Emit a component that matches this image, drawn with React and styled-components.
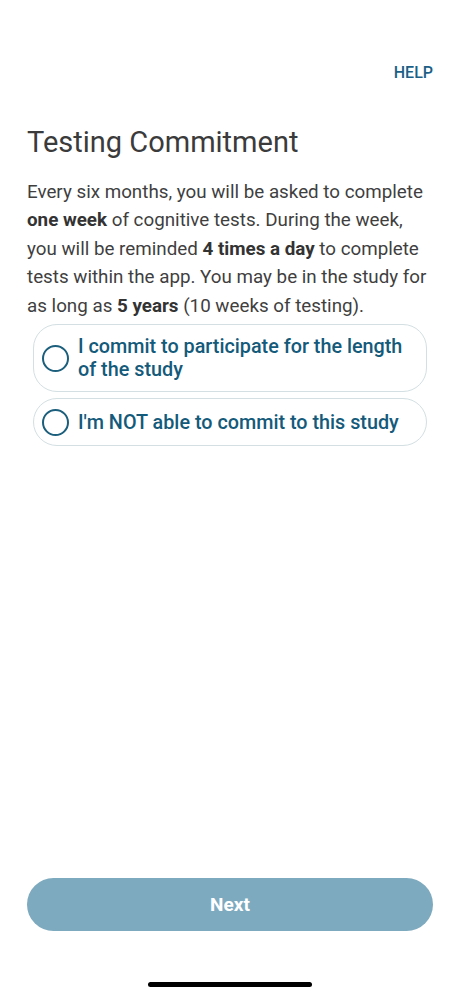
import React, { useState } from 'react';
import styled, { createGlobalStyle } from 'styled-components';

const GlobalStyle = createGlobalStyle`
    html, body {
        margin: 0;
        padding: 0;
        background: #ffffff;
    }
    body {
        font-family: Roboto, "Liberation Sans", sans-serif;
    }
`;

const Screen = styled.div`
    width: 460px;
    height: 996px;
    display: flex;
    flex-direction: column;
    box-sizing: border-box;
    padding: 0 27px;
    background: #ffffff;
`;

const TopBar = styled.div`
    display: flex;
    justify-content: flex-end;
    padding-top: 64px;
`;

const HelpLink = styled.button`
    border: none;
    background: none;
    padding: 0;
    font-family: inherit;
    font-size: 16px;
    font-weight: 500;
    color: #1b5f86;
    line-height: 18px;
`;

const Title = styled.h1`
    margin: 43px 0 0 0;
    font-size: 29px;
    font-weight: 400;
    color: #3b3b3b;
    line-height: 34px;
`;

const Body = styled.p`
    margin: 19px 0 0 0;
    font-size: 18.8px;
    line-height: 28.4px;
    color: #3f3f3f;

    b {
        font-weight: 700;
        color: #333333;
    }
`;

const Options = styled.div`
    display: flex;
    flex-direction: column;
    gap: 6px;
    margin: 4px 6px 0 6px;
`;

const Option = styled.label`
    display: flex;
    align-items: center;
    gap: 9px;
    min-height: 48px;
    box-sizing: border-box;
    padding: ${p => (p.$tall ? '10px 14px 10px 8px' : '0 14px 0 8px')};
    border: 1px solid #d3dfe2;
    border-radius: 24px;
    background: #ffffff;
    cursor: pointer;
`;

const Radio = styled.span`
    flex: none;
    width: 27px;
    height: 27px;
    box-sizing: border-box;
    border-radius: 50%;
    border: 2px solid #1b5f7c;
    display: flex;
    align-items: center;
    justify-content: center;

    &::after {
        content: '';
        width: 13px;
        height: 13px;
        border-radius: 50%;
        background: ${p => (p.$checked ? '#1b5f7c' : 'transparent')};
    }
`;

const OptionText = styled.span`
    font-size: 19.8px;
    font-weight: 500;
    line-height: 23px;
    color: #145a7a;
`;

const Spacer = styled.div`
    flex: 1;
`;

const NextButton = styled.button`
    height: 53px;
    border: none;
    border-radius: 27px;
    background: #7eaabf;
    color: #ffffff;
    font-family: inherit;
    font-size: 19px;
    font-weight: 700;
`;

const HomeBar = styled.div`
    display: flex;
    justify-content: center;
    padding: 51px 0 9px 0;

    &::before {
        content: '';
        width: 164px;
        height: 5px;
        border-radius: 3px;
        background: #000000;
    }
`;

const options = [
    { id: 'yes', text: 'I commit to participate for the length of the study', tall: true },
    { id: 'no', text: "I'm NOT able to commit to this study", tall: false },
];

const App = () => {
    const [choice, setChoice] = useState(null);

    return (
        <>
            <GlobalStyle />
            <Screen>
                <TopBar>
                    <HelpLink>HELP</HelpLink>
                </TopBar>
                <Title>Testing Commitment</Title>
                <Body>
                    Every six months, you will be asked to complete <b>one week</b> of
                    cognitive tests. During the week, you will be reminded{' '}
                    <b>4 times a day</b> to complete tests within the app. You may be in
                    the study for as long as <b>5 years</b> (10 weeks of testing).
                </Body>
                <Options>
                    {options.map(opt => (
                        <Option key={opt.id} $tall={opt.tall} onClick={() => setChoice(opt.id)}>
                            <Radio $checked={choice === opt.id} />
                            <OptionText>{opt.text}</OptionText>
                        </Option>
                    ))}
                </Options>
                <Spacer />
                <NextButton disabled={!choice}>Next</NextButton>
                <HomeBar />
            </Screen>
        </>
    );
};

export default App;
